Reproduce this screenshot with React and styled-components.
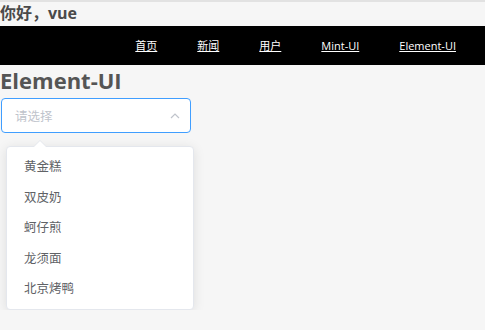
import styled, { createGlobalStyle } from "styled-components";

const GlobalStyle = createGlobalStyle`
  html, body {
    margin: 0;
    padding: 0;
    background: #f6f6f6;
    font-family: "Open Sans", "Noto Sans CJK SC", sans-serif;
  }
  body {
    border-top: 2px solid #e2e2e2;
  }
`;

const foods = ["黄金糕", "双皮奶", "蚵仔煎", "龙须面", "北京烤鸭"];
const links = ["首页", "新闻", "用户", "Mint-UI", "Element-UI"];

const App = () => {
  return (
    <Page>
      <GlobalStyle />
      <Hello>你好，vue</Hello>
      <Nav>
        {links.map((l) => (
          <NavLink key={l} href="#">
            {l}
          </NavLink>
        ))}
      </Nav>
      <Title>Element-UI</Title>
      <SelectWrap>
        <SelectBox>
          <Placeholder>请选择</Placeholder>
          <svg width="12" height="12" viewBox="0 0 12 12">
            <path d="M2 8 L6 4 L10 8" fill="none" stroke="#c0c4cc" strokeWidth="1.2" />
          </svg>
        </SelectBox>
        <Dropdown>
          <Arrow />
          <OptionList>
            {foods.map((f) => (
              <Item key={f}>{f}</Item>
            ))}
          </OptionList>
        </Dropdown>
      </SelectWrap>
    </Page>
  );
};

const Page = styled.div`
  display: flex;
  flex-direction: column;
  color: #555;
`;

const Hello = styled.h1`
  margin: 0;
  height: 24px;
  line-height: 22px;
  font-size: 16px;
  font-weight: 700;
  color: #4a4a4a;
`;

const Nav = styled.nav`
  background: #000;
  height: 39px;
  display: flex;
  align-items: center;
  justify-content: flex-end;
  gap: 40px;
  padding-right: 29px;
`;

const NavLink = styled.a`
  color: #fff;
  font-size: 11px;
  text-decoration: underline;
  line-height: 1;
`;

const Title = styled.h2`
  margin: 0 0 3px;
  font-size: 22px;
  line-height: 30px;
  font-weight: 700;
  color: #555;
`;

const SelectWrap = styled.div`
  width: 190px;
  margin-left: 1px;
  display: flex;
  flex-direction: column;
`;

const SelectBox = styled.div`
  box-sizing: border-box;
  height: 35px;
  border: 1px solid #409eff;
  border-radius: 4px;
  background: #fff;
  display: flex;
  align-items: center;
  justify-content: space-between;
  padding: 0 9px 0 13px;
`;

const Placeholder = styled.span`
  font-size: 12.5px;
  color: #c0c4cc;
`;

const Dropdown = styled.div`
  position: relative;
  margin: 13px 0 0 5px;
  width: 188px;
  box-sizing: border-box;
  background: #fff;
  border: 1px solid #e4e7ed;
  border-radius: 4px;
  box-shadow: 0 2px 12px 0 rgba(0, 0, 0, 0.1);
`;

const OptionList = styled.ul`
  margin: 0;
  padding: 5px 0 4px;
  list-style: none;
`;

const Arrow = styled.span`
  position: absolute;
  top: -6px;
  left: 27px;
  width: 0;
  height: 0;
  border: 6px solid transparent;
  border-top: 0;
  border-bottom-color: #fff;
  filter: drop-shadow(0 -1px 0 #e4e7ed);
`;

const Item = styled.li`
  height: 30.6px;
  line-height: 30.6px;
  padding: 0 17px;
  font-size: 12.5px;
  color: #606266;
`;

export default App;
